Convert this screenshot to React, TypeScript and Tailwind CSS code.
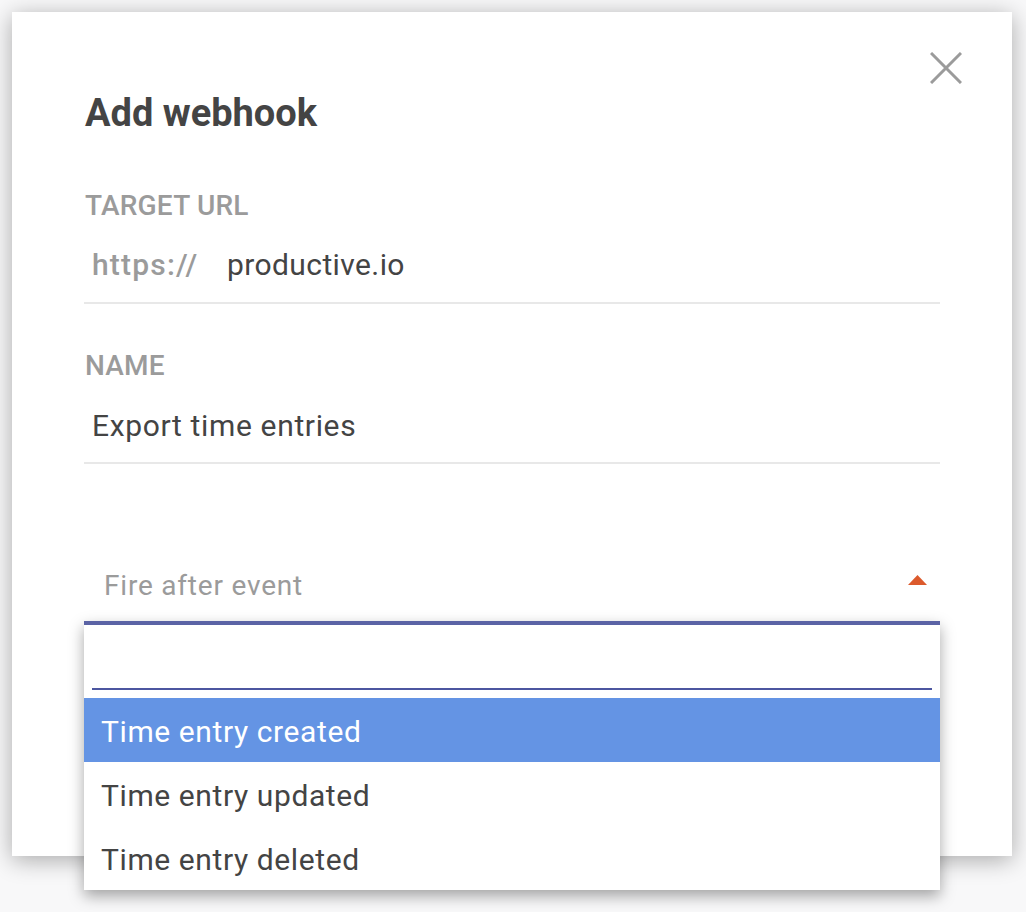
import React from "react";

export default function App() {
  const font = { fontFamily: "Roboto, 'Noto Sans', sans-serif" };
  return (
    <div className="min-h-[912px] w-full bg-[#f8f8f9] p-3" style={font}>
      <div className="relative h-[844px] w-[1000px] bg-white shadow-[0_4px_22px_rgba(0,0,0,0.32)] px-[72px] pt-[82px]">
        <button className="absolute right-[50px] top-[40px] h-8 w-8 text-[#9b9b9b]">
          <svg viewBox="0 0 32 32" className="h-8 w-8" fill="none" stroke="currentColor" strokeWidth="3">
            <path d="M1 1 L31 31 M31 1 L1 31" />
          </svg>
        </button>

        <h1 className="pl-px text-[38px] font-bold leading-none text-[#444444]">Add webhook</h1>

        <div className="mt-[60px] pl-px text-[28px] font-medium leading-none tracking-[0.2px] text-[#9b9b9b]">TARGET URL</div>
        <div className="mt-[30px] flex border-b-2 border-[#e8e8e8] pb-[22px] pl-2 text-[30px] leading-none">
          <span className="w-[135px] font-medium tracking-[1.2px] text-[#9b9b9b]">https://</span>
          <span className="tracking-[0.4px] text-[#444444]">productive.io</span>
        </div>

        <div className="mt-[48px] pl-px text-[28px] font-medium leading-none tracking-[0.2px] text-[#9b9b9b]">NAME</div>
        <div className="mt-[31px] border-b-2 border-[#e8e8e8] pb-[21px] pl-2 text-[30px] leading-none tracking-[0.65px] text-[#444444]">
          Export time entries
        </div>

        <div className="mt-[108px] flex items-center justify-between pl-5 pr-[13px] text-[28px] leading-none tracking-[0.8px] text-[#9b9b9b]">
          <span>Fire after event</span>
          <svg width="19" height="10" viewBox="0 0 19 10" className="mt-[-12px]">
            <path d="M9.5 0 L19 10 L0 10 Z" fill="#dc5a2c" />
          </svg>
        </div>

        <div className="absolute left-[72px] top-[609px] w-[856px] border-t-4 border-[#5b63a5] bg-white shadow-[0_6px_14px_rgba(0,0,0,0.35)]">
          <div className="px-2">
            <div className="h-[65px] border-b-2 border-[#4c56a0]" />
          </div>
          <div className="mt-2">
            <div className="h-[64px] bg-[#6494e4] pl-[17px] pt-[3px] text-[30px] leading-[62px] tracking-[0.6px] text-white">Time entry created</div>
            <div className="h-[64px] pl-[17px] pt-[3px] text-[30px] leading-[62px] tracking-[0.6px] text-[#444444]">Time entry updated</div>
            <div className="h-[64px] pl-[17px] pt-[3px] text-[30px] leading-[62px] tracking-[0.6px] text-[#444444]">Time entry deleted</div>
          </div>
        </div>
      </div>
    </div>
  );
}
